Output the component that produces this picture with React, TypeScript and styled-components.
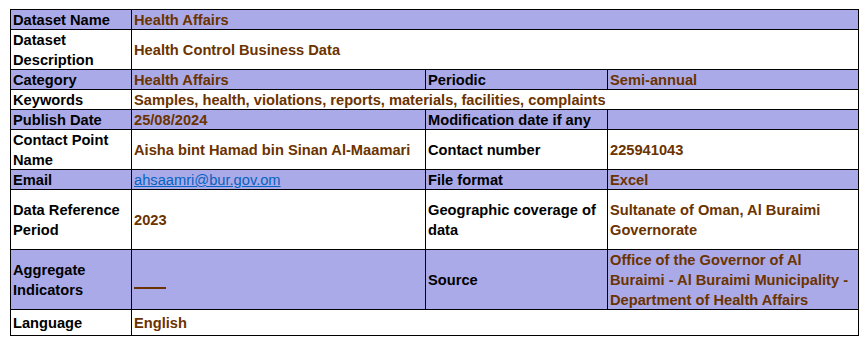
import * as React from 'react'
import styled, { createGlobalStyle } from 'styled-components'

const GlobalStyle = createGlobalStyle`
  body {
    margin: 0;
    background: #ffffff;
    font-family: "Liberation Sans", Arial, sans-serif;
  }
`

const Page = styled.div`
  padding: 9px 0 0 10px;
`

const Sheet = styled.table`
  border-collapse: collapse;
  table-layout: fixed;
  width: 848px;
  font-size: 14.67px;
  font-weight: bold;
  line-height: 20px;
`

const Col = styled.col<{ $width: number }>`
  width: ${({ $width }) => $width}px;
`

const Row = styled.tr<{ $shaded?: boolean; $height: number }>`
  height: ${({ $height }) => $height}px;
  background: ${({ $shaded }) => ($shaded ? '#aaaae8' : '#ffffff')};
`

const Label = styled.td`
  border: 1px solid #000000;
  padding: 0 2px;
  color: #000000;
  vertical-align: middle;
  overflow: hidden;
  white-space: nowrap;
`

const Value = styled(Label)`
  color: #6b3300;
`

// keeps a 20px line pitch inside rows whose pitch already counts the 1px grid line
const Text = styled.div`
  margin-bottom: -1px;
`

const Mail = styled.a`
  color: #0563c1;
  font-weight: normal;
  text-decoration: underline;
`

const Blank = styled.span`
  display: inline-block;
  width: 32px;
  height: 2px;
  margin-top: 14px;
  background: #6b3300;
  vertical-align: middle;
`

type Cell = { text?: React.ReactNode; label?: boolean; span?: number }

type RowData = { height: number; shaded?: boolean; cells: Cell[] }

const colWidths = [121, 294, 182, 251]

const rows: RowData[] = [
  {
    height: 20,
    shaded: true,
    cells: [{ text: 'Dataset Name', label: true }, { text: 'Health Affairs', span: 3 }],
  },
  {
    height: 40,
    cells: [
      { text: <>Dataset<br />Description</>, label: true },
      { text: 'Health Control Business Data', span: 3 },
    ],
  },
  {
    height: 20,
    shaded: true,
    cells: [
      { text: 'Category', label: true },
      { text: 'Health Affairs' },
      { text: 'Periodic', label: true },
      { text: 'Semi-annual' },
    ],
  },
  {
    height: 20,
    cells: [
      { text: 'Keywords', label: true },
      {
        text: 'Samples, health, violations, reports, materials, facilities, complaints',
        span: 3,
      },
    ],
  },
  {
    height: 20,
    shaded: true,
    cells: [
      { text: 'Publish Date', label: true },
      { text: '25/08/2024' },
      { text: 'Modification date if any', label: true },
      {},
    ],
  },
  {
    height: 40,
    cells: [
      { text: <>Contact Point<br />Name</>, label: true },
      { text: 'Aisha bint Hamad bin Sinan Al-Maamari' },
      { text: 'Contact number', label: true },
      { text: '225941043' },
    ],
  },
  {
    height: 20,
    shaded: true,
    cells: [
      { text: 'Email', label: true },
      { text: <Mail href="#">ahsaamri@bur.gov.om</Mail> },
      { text: 'File format', label: true },
      { text: 'Excel' },
    ],
  },
  {
    height: 60,
    cells: [
      { text: <>Data Reference<br />Period</>, label: true },
      { text: '2023' },
      { text: <>Geographic coverage of<br />data</>, label: true },
      { text: <>Sultanate of Oman, Al Buraimi<br />Governorate</> },
    ],
  },
  {
    height: 60,
    shaded: true,
    cells: [
      { text: <>Aggregate<br />Indicators</>, label: true },
      { text: <Blank /> },
      { text: 'Source', label: true },
      {
        text: (
          <>
            Office of the Governor of Al
            <br />
            Buraimi - Al Buraimi Municipality -
            <br />
            Department of Health Affairs
          </>
        ),
      },
    ],
  },
  {
    height: 26,
    cells: [{ text: 'Language', label: true }, { text: 'English', span: 3 }],
  },
]

const App: React.FunctionComponent = () => {
  return (
    <>
      <GlobalStyle />
      <Page>
        <Sheet>
          <colgroup>
            {colWidths.map((w, i) => (
              <Col key={i} $width={w} />
            ))}
          </colgroup>
          <tbody>
            {rows.map((r, i) => (
              <Row key={i} $shaded={r.shaded} $height={r.height}>
                {r.cells.map((c, j) => {
                  const Comp = c.label ? Label : Value
                  return (
                    <Comp key={j} colSpan={c.span}>
                      {c.text !== undefined && <Text>{c.text}</Text>}
                    </Comp>
                  )
                })}
              </Row>
            ))}
          </tbody>
        </Sheet>
      </Page>
    </>
  )
}

export default App
